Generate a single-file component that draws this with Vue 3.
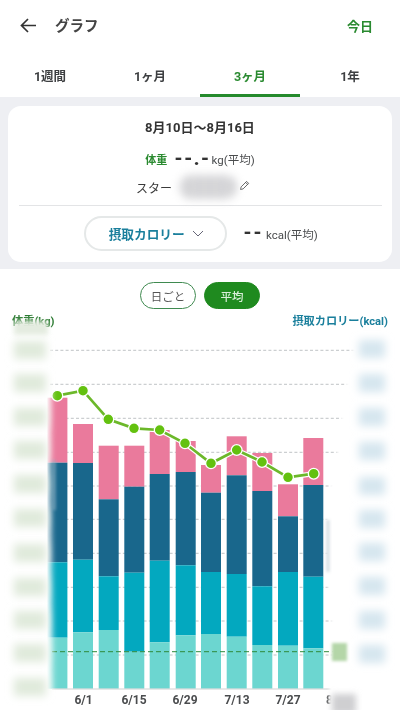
<script setup>
import { computed } from 'vue'

const tabs = [
  { label: '1週間', active: false },
  { label: '1ヶ月', active: false },
  { label: '3ヶ月', active: true },
  { label: '1年', active: false },
]

const barRows = [
  [47.4, 397.7, 462.7, 562.3, 637.7],
  [73, 424, 463, 559.7, 632.3],
  [98.7, 445.7, 499.3, 576.3, 630],
  [124.3, 445.7, 486.7, 572.7, 651.7],
  [149.7, 430, 474, 560.7, 642.3],
  [175.7, 441, 472, 565.3, 635.3],
  [201, 465, 492.7, 572, 634],
  [226.7, 436.3, 475.3, 574, 636.7],
  [252.3, 453, 491, 586.3, 645],
  [278, 484.3, 516.3, 572, 645.7],
  [303.3, 438, 485, 576.7, 648.3],
]
const base = 688.7
const bars = computed(() =>
  barRows.map(([x, a, b, c, d]) => ({
    x,
    segs: [
      { y: a, h: b - a, fill: '#ea7a9c' },
      { y: b, h: c - b, fill: '#19678c' },
      { y: c, h: d - c, fill: '#03a8bf' },
      { y: d, h: base - d, fill: '#6cd6d0' },
    ],
  })),
)

const points = [
  [57.3, 395.7], [83, 390.7], [108.3, 419.3], [134, 428.3], [159.7, 430], [185, 443.3],
  [211, 463.3], [236.7, 450], [262, 462], [288, 477.3], [313.7, 473.7],
]
const linePoints = points.map((p) => p.join(',')).join(' ')

const grid = [350.3, 384.3, 418.3, 452.3, 486, 519.3, 553.3, 587.3, 621, 655]
const xLabels = [
  { x: 83.5, t: '6/1' },
  { x: 134, t: '6/15' },
  { x: 185, t: '6/29' },
  { x: 237, t: '7/13' },
  { x: 288, t: '7/27' },
]
const leftBlocks = [350, 383, 417, 450, 484, 518, 553, 587, 620, 653, 687]
const rightBlocks = [349, 383, 417, 451, 486, 519, 552, 586, 620, 654]
const rightCover = '352,310 352,350 346,384 341,418 337,452 330,486 326,519 326,553 328,587 331,621 331,655 329,700 329,720 420,720 420,310'
</script>

<template>
  <div class="screen">
    <header class="top">
      <svg class="back" width="16" height="15" viewBox="0 0 16 15" fill="none">
        <path d="M16 7.500H1.500M8 1L1.500 7.500 8 14" stroke="#333" stroke-width="1.700" />
      </svg>
      <span class="title">グラフ</span>
      <span class="today">今日</span>
    </header>

    <nav class="tabs">
      <div v-for="t in tabs" :key="t.label" class="tab" :class="{ on: t.active }">{{ t.label }}</div>
    </nav>

    <section class="panel">
      <div class="card">
        <div class="date">8月10日〜8月16日</div>
        <div class="weight">
          <span class="w-label">体重</span>
          <span class="dashes">--.-</span>
          <span class="unit tight">kg(平均)</span>
        </div>
        <div class="star">
          <span>スター</span>
          <span class="smudge"></span>
          <svg class="pencil" width="11" height="11" viewBox="0 0 11 11" fill="none">
            <path d="M1.500 9.500l.6-2.600L7.600 1.400l2 2L4.100 8.900z M6.600 2.400l2 2" stroke="#555" stroke-width="0.900" />
          </svg>
        </div>
        <div class="divider"></div>
        <div class="intake">
          <button class="pill">
            <span>摂取カロリー</span>
            <svg width="12" height="7" viewBox="0 0 12 7" fill="none">
              <path d="M1 1l5 5 5-5" stroke="#667" stroke-width="1" />
            </svg>
          </button>
          <span class="dashes small">--</span>
          <span class="unit">kcal(平均)</span>
        </div>
      </div>
    </section>

    <section class="chart">
      <div class="toggle">
        <span class="seg">日ごと</span>
        <span class="seg fill">平均</span>
      </div>
      <div class="axis-titles">
        <span class="a-left">体重(kg)</span>
        <span class="a-right">摂取カロリー(kcal)</span>
      </div>
      <svg class="plot" width="400" height="382" viewBox="0 328 400 382">
        <defs>
          <filter id="b1" x="-60%" y="-60%" width="220%" height="220%"><feGaussianBlur stdDeviation="1.400" /></filter>
          <filter id="b3" x="-60%" y="-60%" width="220%" height="220%"><feGaussianBlur stdDeviation="3" /></filter>
          <filter id="b4" x="-60%" y="-60%" width="220%" height="220%"><feGaussianBlur stdDeviation="4.500" /></filter>
        </defs>

        <line
          v-for="y in grid"
          :key="y"
          x1="50"
          x2="356"
          :y1="y"
          :y2="y"
          stroke="#b9bcc0"
          stroke-width="0.900"
          stroke-dasharray="3 2.200"
        />
        <g v-for="b in bars" :key="b.x">
          <rect v-for="s in b.segs" :key="s.fill" :x="b.x" :y="s.y" width="20" :height="s.h" :fill="s.fill" />
        </g>
        <line x1="52" x2="335" y1="651.700" y2="651.700" stroke="#2f8a3a" stroke-width="1" stroke-dasharray="5 3" />
        <line x1="52" x2="335" y1="689" y2="689" stroke="#cfd2d2" stroke-width="1.200" />

        <polyline :points="linePoints" fill="none" stroke="#fff" stroke-width="5" />
        <polyline :points="linePoints" fill="none" stroke="#6cb82a" stroke-width="2.700" />
        <circle v-for="p in points" :key="p[0]" :cx="p[0]" :cy="p[1]" r="5.400" fill="#63c10f" stroke="#fff" stroke-width="1.300" />

        <text v-for="l in xLabels" :key="l.t" class="tick" :x="l.x" y="703.500" text-anchor="middle">{{ l.t }}</text>
        <text class="tick" x="326" y="703.500">8/10</text>

        <polygon points="-20,320 51,320 51,396 50,460 51,560 52,640 52,720 -20,720" fill="#fff" filter="url(#b3)" />
        <rect x="52" y="460" width="4" height="50" fill="#8fb2c4" opacity="0.500" filter="url(#b1)" />
        <polygon :points="rightCover" fill="#fff" filter="url(#b1)" />
        <rect x="326.500" y="520" width="3" height="52" fill="#b8c6cf" opacity="0.600" filter="url(#b1)" />

        <g fill="#e0eadb">
          <rect v-for="y in leftBlocks" :key="y" x="14" :y="y - 9" width="32" height="18" filter="url(#b4)" />
        </g>
        <g fill="#d6e6ef">
          <rect v-for="y in rightBlocks" :key="y" x="359" :y="y - 9" width="26" height="18" filter="url(#b4)" />
        </g>
        <rect x="332" y="643" width="15" height="18" fill="#b4d6a8" filter="url(#b1)" />
        <rect x="332" y="694" width="24" height="20" fill="#cfcfd1" filter="url(#b3)" />
      </svg>
      <div class="title-smudge"></div>
    </section>
  </div>
</template>

<style scoped>
.screen {
  width: 400px;
  height: 710px;
  overflow: hidden;
  background: #fff;
  font-family: Roboto, "Noto Sans CJK JP", sans-serif;
  color: #2f3133;
  filter: blur(0.35px);
}
.top {
  height: 50px;
  box-sizing: border-box;
  display: flex;
  align-items: center;
  padding: 1px 27px 0 20px;
}
.back { margin-right: 19px; }
.title { font-size: 14.500px; font-weight: 700; color: #444; margin-top: -2px; }
.today { margin-left: auto; font-size: 13px; font-weight: 700; color: #2a8a30; }
.tabs {
  height: 47px;
  display: grid;
  grid-template-columns: repeat(4, 1fr);
}
.tab {
  display: flex;
  align-items: center;
  justify-content: center;
  padding-top: 6px;
  font-size: 12.500px;
  font-weight: 700;
  color: #3d3f41;
  border-bottom: 3px solid transparent;
}
.tab.on { color: #2a8a30; border-bottom-color: #258a2c; }
.panel {
  background: #eeeff3;
  padding: 9px 8px 7px;
}
.card {
  height: 156px;
  box-sizing: border-box;
  background: #fff;
  border-radius: 13px;
  padding: 12px 11px 0;
  display: flex;
  flex-direction: column;
  align-items: center;
}
.date { font-size: 13px; font-weight: 700; line-height: 20px; color: #333; }
.weight {
  margin-top: 11px;
  height: 20px;
  display: flex;
  align-items: center;
  gap: 7px;
}
.w-label { font-size: 11px; font-weight: 700; color: #2a8a30; }
.dashes { font-size: 19px; line-height: 1; font-weight: 900; letter-spacing: 1.200px; color: #333; margin-top: -2px; }
.dashes.small { letter-spacing: 1.400px; }
.unit { font-size: 11.500px; color: #4a4c4e; }
.unit.tight { margin-left: -6px; }
.star {
  margin-top: 8px;
  height: 20px;
  display: flex;
  align-items: center;
  font-size: 12px;
  color: #3a3a3a;
  margin-right: 14px;
}
.smudge {
  width: 58px;
  height: 24px;
  margin: 0 2px 0 7px;
  border-radius: 13px;
  background: repeating-linear-gradient(90deg, #dcdcde 0 7px, #cacacd 7px 11px);
  filter: blur(4px);
}
.pencil { margin-top: -3px; }
.divider {
  width: 363px;
  margin-top: 8px;
  height: 1px;
  background: #e3e4e6;
}
.intake {
  margin-top: 10px;
  display: flex;
  align-items: center;
  margin-left: 2px;
}
.intake .dashes { margin-left: 16px; margin-right: 3px; }
.pill {
  width: 143px;
  height: 35px;
  box-sizing: border-box;
  border: 2px solid #e5e8e8;
  border-radius: 18px;
  background: #fff;
  display: flex;
  align-items: center;
  justify-content: center;
  gap: 7px;
  padding: 0 0 0 1px;
  font: inherit;
  font-size: 12.700px;
  font-weight: 700;
  color: #1a7f9c;
}
.chart { position: relative; height: 441px; }
.toggle {
  padding-top: 13px;
  display: flex;
  justify-content: center;
  gap: 8px;
}
.seg {
  width: 56px;
  height: 27px;
  box-sizing: border-box;
  border: 1.300px solid #3f8a50;
  border-radius: 14px;
  display: flex;
  align-items: center;
  justify-content: center;
  font-size: 11.500px;
  color: #555;
}
.seg.fill { background: #1f8a1f; border-color: #1f8a1f; color: #d8eed8; font-weight: 500; }
.axis-titles {
  margin-top: 2px;
  padding: 0 12px;
  height: 17px;
  display: flex;
  justify-content: space-between;
  align-items: center;
  font-size: 11.200px;
  font-weight: 700;
}
.a-left { color: #2a7a30; }
.a-right { color: #1a7f9c; }
.plot { display: block; }
.tick { font-size: 12px; font-weight: 700; fill: #4a4c4e; }
.title-smudge {
  position: absolute;
  left: 14px;
  top: 52px;
  width: 34px;
  height: 14px;
  background: #e4ece0;
  filter: blur(2.500px);
}
</style>
